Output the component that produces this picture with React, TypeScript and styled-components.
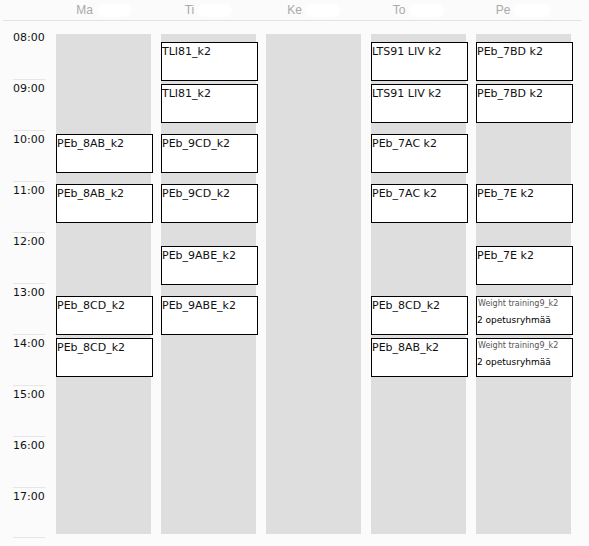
import React from 'react';
import styled, { createGlobalStyle } from 'styled-components';

const GlobalStyle = createGlobalStyle`
  body {
    margin: 0;
    background: #fbfbfb;
    font-family: 'DejaVu Sans', Verdana, sans-serif;
  }
`;

const Page = styled.div`
  width: 589px;
  height: 546px;
  overflow: hidden;
`;

const Header = styled.div`
  display: grid;
  grid-template-columns: 43px repeat(5, 95px);
  column-gap: 10px;
  margin: 0 7px 0 3px;
  height: 20px;
  border-bottom: 1px solid #e2e2e2;
`;

const DayHead = styled.div`
  display: flex;
  align-items: center;
  justify-content: center;
  gap: 4px;
  font-family: 'Liberation Sans', Arial, sans-serif;
  font-size: 12px;
  color: #a9a9a9;
`;

const DateBlob = styled.span<{ w: number }>`
  display: inline-block;
  width: ${(p) => p.w}px;
  height: 13px;
  border-radius: 6px;
  background: #ffffff;
`;

const Body = styled.div`
  display: grid;
  grid-template-columns: 43px repeat(5, 95px);
  column-gap: 10px;
  margin-left: 3px;
`;

const TimeCol = styled.div`
  padding: 7px 0 0 10px;
`;

const Slot = styled.div<{ first?: boolean; last?: boolean }>`
  width: 32px;
  height: 51px;
  padding-top: 2px;
  box-sizing: border-box;
  border-top: 1px solid ${(p) => (p.first ? 'transparent' : '#e6e6e6')};
  border-bottom: ${(p) => (p.last ? '1px solid #e6e6e6' : 'none')};
  font-size: 11px;
  line-height: 13px;
  color: #111;
`;

const DayCol = styled.div`
  position: relative;
  margin-top: 13px;
  height: 500px;
  background: #dedede;
`;

const Lesson = styled.div`
  position: absolute;
  left: 0;
  width: 97px;
  height: 39px;
  box-sizing: border-box;
  border: 1px solid #000;
  background: #fff;
  padding: 2px 0 0 0;
  font-size: 11px;
  line-height: 13px;
  color: #111;
  white-space: nowrap;
  overflow: hidden;
`;

const SubTitle = styled.div`
  font-size: 8px;
  line-height: 10px;
  color: #555;
  padding-left: 1px;
`;

const GroupCount = styled.div`
  margin-top: 6px;
  font-size: 9px;
  line-height: 11px;
  color: #000;
`;

type Item = { top: number; label: string; sub?: string };

const hours = ['08:00', '09:00', '10:00', '11:00', '12:00', '13:00', '14:00', '15:00', '16:00', '17:00'];

const days: { name: string; blob: number; items: Item[] }[] = [
  {
    name: 'Ma',
    blob: 34,
    items: [
      { top: 100, label: 'PEb_8AB_k2' },
      { top: 150, label: 'PEb_8AB_k2' },
      { top: 262, label: 'PEb_8CD_k2' },
      { top: 304, label: 'PEb_8CD_k2' },
    ],
  },
  {
    name: 'Ti',
    blob: 34,
    items: [
      { top: 8, label: 'TLI81_k2' },
      { top: 50, label: 'TLI81_k2' },
      { top: 100, label: 'PEb_9CD_k2' },
      { top: 150, label: 'PEb_9CD_k2' },
      { top: 212, label: 'PEb_9ABE_k2' },
      { top: 262, label: 'PEb_9ABE_k2' },
    ],
  },
  { name: 'Ke', blob: 34, items: [] },
  {
    name: 'To',
    blob: 35,
    items: [
      { top: 8, label: 'LTS91 LIV k2' },
      { top: 50, label: 'LTS91 LIV k2' },
      { top: 100, label: 'PEb_7AC k2' },
      { top: 150, label: 'PEb_7AC k2' },
      { top: 262, label: 'PEb_8CD_k2' },
      { top: 304, label: 'PEb_8AB_k2' },
    ],
  },
  {
    name: 'Pe',
    blob: 37,
    items: [
      { top: 8, label: 'PEb_7BD k2' },
      { top: 50, label: 'PEb_7BD k2' },
      { top: 150, label: 'PEb_7E k2' },
      { top: 212, label: 'PEb_7E k2' },
      { top: 262, label: '2 opetusryhmää', sub: 'Weight training9_k2' },
      { top: 304, label: '2 opetusryhmää', sub: 'Weight training9_k2' },
    ],
  },
];

const App = () => {
  return (
    <Page>
      <GlobalStyle />
      <Header>
        <div />
        {days.map((d) => (
          <DayHead key={d.name}>
            {d.name}
            <DateBlob w={d.blob} />
          </DayHead>
        ))}
      </Header>
      <Body>
        <TimeCol>
          {hours.map((h, i) => (
            <Slot key={h} first={i === 0} last={i === hours.length - 1}>
              {h}
            </Slot>
          ))}
        </TimeCol>
        {days.map((d) => (
          <DayCol key={d.name}>
            {d.items.map((it, i) => (
              <Lesson key={i} style={{ top: it.top }}>
                {it.sub ? (
                  <>
                    <SubTitle>{it.sub}</SubTitle>
                    <GroupCount>{it.label}</GroupCount>
                  </>
                ) : (
                  it.label
                )}
              </Lesson>
            ))}
          </DayCol>
        ))}
      </Body>
    </Page>
  );
};

export default App;
